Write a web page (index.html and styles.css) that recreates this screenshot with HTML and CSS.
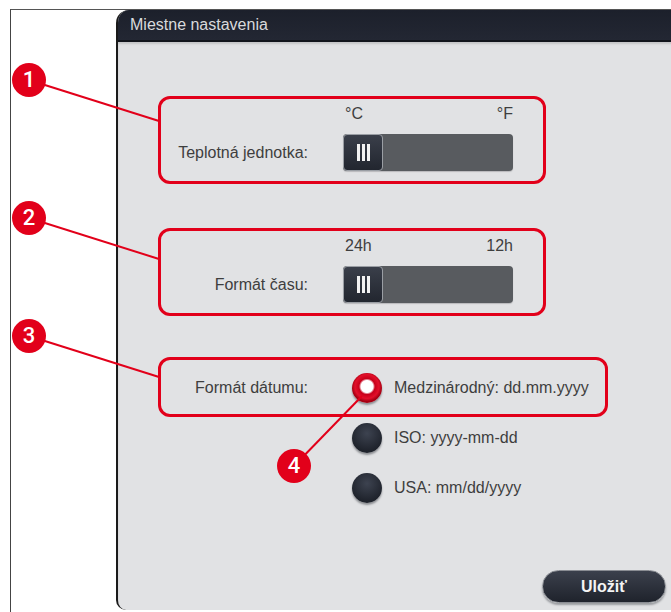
FILE: index.html
```html
<!DOCTYPE html>
<html>
<head>
    <meta charset="UTF-8" />
    <meta name="viewport" content="width=device-width, initial-scale=1.0" />
    <title>Miestne nastavenia</title>
    <link rel="stylesheet" href="styles.css">
</head>
<body>
    <div id="frame">
        <div class="dialog">
            <div class="dialog-title">Miestne nastavenia</div>
            <div class="dialog-body">

                <div class="callout-box setting">
                    <div></div>
                    <div class="units"><span>°C</span><span>°F</span></div>
                    <div class="setting-label">Teplotná jednotka:</div>
                    <div class="track"><div class="thumb"><i></i><i></i><i></i></div></div>
                </div>

                <div class="callout-box setting">
                    <div></div>
                    <div class="units"><span>24h</span><span>12h</span></div>
                    <div class="setting-label">Formát času:</div>
                    <div class="track"><div class="thumb"><i></i><i></i><i></i></div></div>
                </div>

                <div class="date-group">
                    <div class="callout-box date-row">
                        <div class="setting-label">Formát dátumu:</div>
                        <span class="radio checked"></span>
                        <span class="radio-text">Medzinárodný: dd.mm.yyyy</span>
                    </div>
                    <div class="radio-row">
                        <span class="radio"></span>
                        <span class="radio-text">ISO: yyyy-mm-dd</span>
                    </div>
                    <div class="radio-row third">
                        <span class="radio"></span>
                        <span class="radio-text">USA: mm/dd/yyyy</span>
                    </div>
                </div>

                <div class="dialog-footer">
                    <button class="save-btn">Uložiť</button>
                </div>
            </div>
        </div>
    </div>

    <!-- annotation layer -->
    <svg class="leader-lines" width="671" height="612" viewBox="0 0 671 612">
        <line x1="29" y1="80" x2="159" y2="121" />
        <line x1="29" y1="218" x2="159" y2="259" />
        <line x1="29" y1="336" x2="159" y2="377" />
        <line x1="294" y1="466" x2="362" y2="396" />
    </svg>
    <div class="marker m1">1</div>
    <div class="marker m2">2</div>
    <div class="marker m3">3</div>
    <div class="marker m4">4</div>
</body>
</html>
```

FILE: styles.css
```css
body { margin: 0; overflow: hidden; font-family: "Liberation Sans", Arial, sans-serif; background: #fff; height: 612px; }

#frame {
    margin: 9px 0 0 10px;
    border-top: 1px solid #555;
    border-left: 1px solid #444;
    height: 603px;
}

.dialog {
    margin: 0 0 0 105px;
    width: 558px;
    height: 600px;
    display: flex;
    flex-direction: column;
    border-radius: 13px 0 0 10px;
    overflow: hidden;
    border-left: 2px solid #1a1a1a;
    background: #e1e2e4;
}
.dialog-title {
    height: 30px;
    line-height: 30px;
    padding-left: 12px;
    background: linear-gradient(#1c202b, #232733);
    border-bottom: 2px solid #12151c;
    color: #d9dadc;
    font-size: 16px;
}
.dialog-body {
    flex-grow: 1;
    display: flex;
    flex-direction: column;
    padding: 54px 0 0 40px;
    box-shadow: inset 0 2px 2px #c4c5c7;
    color: #3e3e3e;
    font-size: 16px;
}

.callout-box {
    border: 3px solid #e2001a;
    border-radius: 12px;
}

.setting {
    width: 382px;
    display: grid;
    grid-template-columns: 147px 170px;
    column-gap: 35px;
    row-gap: 11px;
    padding: 6px 0 10px 0;
    align-items: center;
    margin-bottom: 44px;
}
.setting + .setting { margin-bottom: 41px; }
.setting-label { text-align: right; }
.units { display: flex; justify-content: space-between; line-height: 18px; padding-left: 2px; }

.track {
    height: 37px;
    background: #585b5f;
    border-radius: 4px;
    box-shadow: 0 1px 1px #b8b9bb;
}
.thumb {
    width: 38px;
    height: 35px;
    border: 1px solid #9a9ea4;
    border-radius: 4px;
    background: linear-gradient(#3a3f4a, #22262f);
    display: flex;
    justify-content: center;
    align-items: center;
    gap: 2px;
}
.thumb i { width: 3px; height: 17px; background: #f2f2f2; }

.date-row {
    width: 444px;
    height: 52px;
    padding-top: 2px;
    display: grid;
    grid-template-columns: 147px 30px auto;
    align-items: center;
}
.date-row .radio { margin-left: 44px; }
.date-row .radio-text { margin-left: 56px; }

.radio-row {
    display: flex;
    align-items: center;
    gap: 12px;
    padding-left: 194px;
    margin-top: 6px;
    height: 30px;
}
.radio-row.third { margin-top: 20px; }

.radio {
    display: block;
    width: 30px;
    height: 30px;
    border-radius: 50%;
    background: radial-gradient(circle at 50% 35%, #3d4350, #1f232c 70%);
    box-shadow: 0 2px 2px #8e9094;
}
.radio.checked {
    background: radial-gradient(circle at 50% 45%, #fff 0 6px, #c8001a 8px, #e2102a 12px, #a50012 15px);
}
.radio-text { white-space: nowrap; }

.dialog-footer {
    margin-top: auto;
    display: flex;
    justify-content: flex-end;
    padding: 0 10px 7px 0;
}
.save-btn {
    width: 124px;
    height: 33px;
    border-radius: 17px;
    border: 1px solid #8a8d93;
    background: linear-gradient(#3b404c, #1f232c);
    box-shadow: 0 2px 2px #9a9ca0;
    color: #f4f4f4;
    font-family: "Liberation Sans", Arial, sans-serif;
    font-weight: bold;
    font-size: 16px;
}

.leader-lines { position: absolute; top: 0; left: 0; pointer-events: none; }
.leader-lines line { stroke: #e2001a; stroke-width: 2; }

.marker {
    position: absolute;
    width: 34px;
    height: 34px;
    border-radius: 50%;
    background: #e2001a;
    color: #fff;
    font-family: Roboto, "Liberation Sans", sans-serif;
    font-weight: 500;
    font-size: 22px;
    line-height: 34px;
    text-align: center;
}
.m1 { left: 12px; top: 63px; }
.m2 { left: 12px; top: 201px; }
.m3 { left: 12px; top: 319px; }
.m4 { left: 277px; top: 449px; }
```
